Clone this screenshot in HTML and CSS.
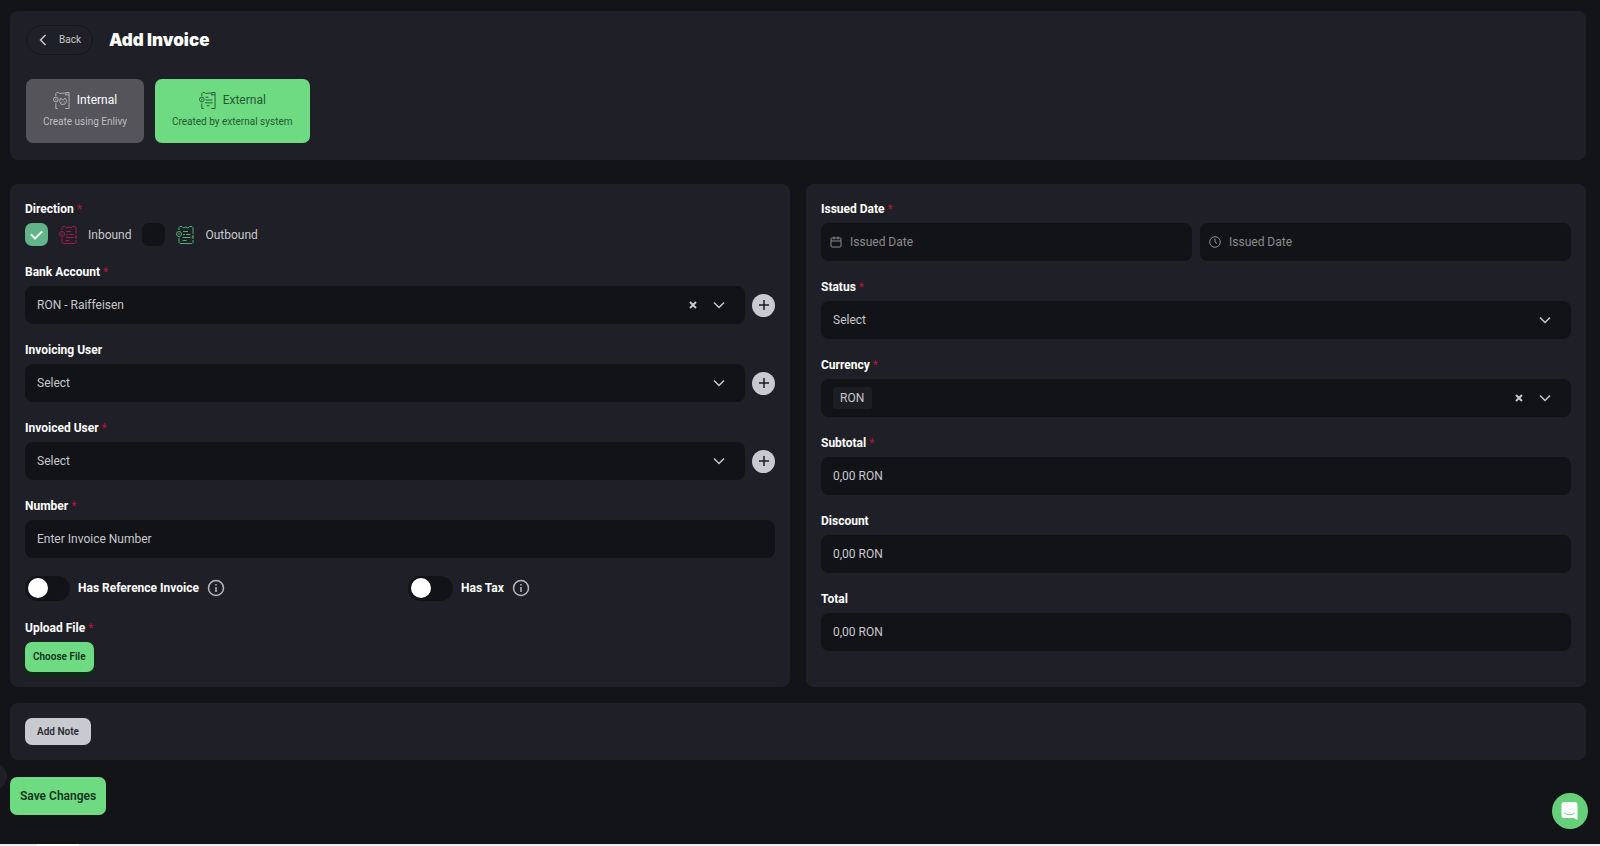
FILE: index.html
```html
<!DOCTYPE html>
<html lang="en">

<head>
    <meta charset="utf-8">
    <meta name="viewport" content="width=device-width, initial-scale=1">
    <title>Add Invoice</title>
    <link rel="stylesheet" href="styles.css">
</head>

<body>
    <!-- shared icons -->
    <svg class="sprite" aria-hidden="true">
        <symbol id="chevron" viewBox="0 0 12 8">
            <path d="M1 1.5l5 5 5-5" />
        </symbol>
        <symbol id="plus" viewBox="0 0 12 12">
            <path d="M6 1v10M1 6h10" />
        </symbol>
        <symbol id="cross" viewBox="0 0 8 8">
            <path d="M1 1l6 6M7 1L1 7" />
        </symbol>
        <symbol id="info" viewBox="0 0 18 18">
            <circle cx="9" cy="9" r="7.5" />
            <path d="M9 8v5M9 5v1.4" />
        </symbol>
        <symbol id="invoice" viewBox="0 0 18 18">
            <path d="M3 4V1.5L4 .5h2l1.5 1.5L10 1l2 1 1.5-1.5H16l1 1V8M3 12v4.5l1 1h12l1-1V14" />
            <circle cx="3" cy="8" r="2.5" />
            <path d="M3 7v2M7 5.5h5M7 8.500h2M10 8.500h4.500M6.500 11.500h8M6.500 14.500h4M17 9v4M15.500 11h2" />
        </symbol>
        <symbol id="invoice-plain" viewBox="0 0 18 18">
            <path d="M3 4.500V1.500L4 .5h1.500L7 1.500l6-.5L14.500.5 13 3h4V.5h-2.500M17 3v14.500h-4M3 12v5.500h2" />
            <circle cx="3" cy="8" r="2.500" />
            <path d="M3 7v2M7 5.500h3M7 8.500h7M6.500 11.500h8M8 14.500h3" />
        </symbol>
        <symbol id="invoice-internal" viewBox="0 0 18 18">
            <path d="M3 4.500V1.500L4 .5h1.500L7 1.500l6-.5L14.500.5 13 3h4V.5h-2.500M17 3v14.500h-4M3 12v5.500h2" />
            <circle cx="3" cy="8" r="2.500" />
            <path d="M3 7v2M7 10l1-3.500 2.500 2L13 6.500l1.500 3.500-2 3h-4zM9.500 10v1M12 10v1" />
        </symbol>
    </svg>

    <main class="page">
        <header class="card header">
            <div class="title-row">
                <a class="back" href="#">
                    <svg viewBox="0 0 8 12" aria-hidden="true"><path d="M6.5 1l-5 5 5 5" /></svg>
                    Back
                </a>
                <h1>Add Invoice</h1>
            </div>
            <div class="types">
                <button type="button" class="type">
                    <span class="type-name"><svg class="doc"><use href="#invoice-internal" /></svg>Internal</span>
                    <span class="type-text">Create using Enlivy</span>
                </button>
                <button type="button" class="type active">
                    <span class="type-name"><svg class="doc"><use href="#invoice-plain" /></svg>External</span>
                    <span class="type-text">Created by external system</span>
                </button>
            </div>
        </header>

        <form class="form">
            <div class="columns">
                <section class="card fields">
                    <div class="field">
                        <span class="label">Direction <i>*</i></span>
                        <div class="checks">
                            <label><input type="checkbox" class="check" checked><svg class="doc red"><use href="#invoice" /></svg>Inbound</label>
                            <label><input type="checkbox" class="check"><svg class="doc green"><use href="#invoice" /></svg>Outbound</label>
                        </div>
                    </div>

                    <div class="field">
                        <label class="label" for="bank">Bank Account <i>*</i></label>
                        <div class="with-add">
                            <div class="box">
                                <select id="bank"><option>RON - Raiffeisen</option></select>
                                <button type="button" class="clear" aria-label="Clear"><svg><use href="#cross" /></svg></button>
                                <svg class="chevron"><use href="#chevron" /></svg>
                            </div>
                            <button type="button" class="add" aria-label="Add bank account"><svg><use href="#plus" /></svg></button>
                        </div>
                    </div>

                    <div class="field">
                        <label class="label" for="invoicing">Invoicing User</label>
                        <div class="with-add">
                            <div class="box">
                                <select id="invoicing"><option>Select</option></select>
                                <svg class="chevron"><use href="#chevron" /></svg>
                            </div>
                            <button type="button" class="add" aria-label="Add invoicing user"><svg><use href="#plus" /></svg></button>
                        </div>
                    </div>

                    <div class="field">
                        <label class="label" for="invoiced">Invoiced User <i>*</i></label>
                        <div class="with-add">
                            <div class="box">
                                <select id="invoiced"><option>Select</option></select>
                                <svg class="chevron"><use href="#chevron" /></svg>
                            </div>
                            <button type="button" class="add" aria-label="Add invoiced user"><svg><use href="#plus" /></svg></button>
                        </div>
                    </div>

                    <div class="field">
                        <label class="label" for="number">Number <i>*</i></label>
                        <div class="box"><input id="number" type="text" placeholder="Enter Invoice Number"></div>
                    </div>

                    <div class="toggles">
                        <label><input type="checkbox" class="toggle">Has Reference Invoice<svg class="info"><use href="#info" /></svg></label>
                        <label><input type="checkbox" class="toggle">Has Tax<svg class="info"><use href="#info" /></svg></label>
                    </div>

                    <div class="field">
                        <span class="label">Upload File <i>*</i></span>
                        <button type="button" class="btn choose">Choose File</button>
                    </div>
                </section>

                <section class="card fields">
                    <div class="field">
                        <label class="label" for="date">Issued Date <i>*</i></label>
                        <div class="dates">
                            <div class="box muted">
                                <svg viewBox="0 0 12 12" aria-hidden="true"><rect x="1" y="2" width="10" height="9" rx="1" /><path d="M1 5h10M4 .5v3M8 .5v3" /></svg>
                                <input id="date" type="text" placeholder="Issued Date">
                            </div>
                            <div class="box muted">
                                <svg viewBox="0 0 12 12" aria-hidden="true"><circle cx="6" cy="6" r="5.3" /><path d="M6 2.5V6l2 1.5" /></svg>
                                <input type="text" placeholder="Issued Date" aria-label="Issued time">
                            </div>
                        </div>
                    </div>

                    <div class="field">
                        <label class="label" for="status">Status <i>*</i></label>
                        <div class="box">
                            <select id="status"><option>Select</option></select>
                            <svg class="chevron"><use href="#chevron" /></svg>
                        </div>
                    </div>

                    <div class="field">
                        <label class="label" for="currency">Currency <i>*</i></label>
                        <div class="box">
                            <select id="currency" class="chip"><option>RON</option></select>
                            <button type="button" class="clear" aria-label="Clear"><svg><use href="#cross" /></svg></button>
                            <svg class="chevron"><use href="#chevron" /></svg>
                        </div>
                    </div>

                    <div class="field">
                        <label class="label" for="subtotal">Subtotal <i>*</i></label>
                        <div class="box"><input id="subtotal" type="text" value="0,00 RON"></div>
                    </div>

                    <div class="field">
                        <label class="label" for="discount">Discount</label>
                        <div class="box"><input id="discount" type="text" value="0,00 RON"></div>
                    </div>

                    <div class="field">
                        <label class="label" for="total">Total</label>
                        <div class="box"><input id="total" type="text" value="0,00 RON"></div>
                    </div>
                </section>
            </div>

            <section class="card notes">
                <button type="button" class="btn note">Add Note</button>
            </section>

            <button type="submit" class="btn save">Save Changes</button>
        </form>
    </main>

    <div class="edge"><span></span></div>
    <div class="handle"></div>
    <button type="button" class="chat" aria-label="Open chat">
        <svg viewBox="0 0 18 20" aria-hidden="true">
            <path class="bubble" d="M3 1h11a2.500 2.500 0 0 1 2.500 2.500V19l-3.500-2H3a2.500 2.500 0 0 1-2.500-2.500v-11A2.500 2.500 0 0 1 3 1z" />
            <path class="smile" d="M3.500 12c3 2.300 7 2.300 10 0" />
        </svg>
    </button>
</body>

</html>
```
FILE: styles.css
```css
:root {
    --bg: #131418;
    --card: #1f2027;
    --input: #121317;
    --text: #c8c8cc;
    --green: #6edb82;
    --light: #c9c9d0;
}

* {
    box-sizing: border-box;
}

body {
    margin: 0;
    min-height: 100vh;
    display: flex;
    flex-direction: column;
    background: var(--bg);
    color: var(--text);
    font: 12px/20px Roboto, "Liberation Sans", sans-serif;
}

button,
input,
select {
    font: inherit;
    color: inherit;
    margin: 0;
}

button {
    border: 0;
    padding: 0;
    cursor: pointer;
}

svg {
    flex: none;
    fill: none;
    stroke: currentColor;
}

.sprite {
    display: none;
}

.page {
    flex: 1;
    padding: 11px 14px 16px 10px;
}

.card {
    background: var(--card);
    border-radius: 8px;
    padding: 15px;
}

/* header */
.header {
    padding: 14px 16px 17px;
    margin-bottom: 24px;
}

.title-row {
    display: flex;
    align-items: center;
    gap: 16px;
    margin-bottom: 24px;
}

h1 {
    margin: 0;
    color: #fff;
    font: 900 17px/28px Inter, sans-serif;
}

.back {
    display: flex;
    align-items: center;
    gap: 12px;
    height: 30px;
    padding: 0 11px 0 12px;
    border: 1px solid #16171b;
    border-radius: 15px;
    color: var(--text);
    font-size: 10px;
    text-decoration: none;
}

.back svg {
    width: 8px;
    height: 12px;
    stroke-width: 1.5;
}

.types {
    display: flex;
    gap: 11px;
}

.type {
    display: flex;
    flex-direction: column;
    align-items: center;
    gap: 2px;
    padding: 11px 17px;
    border-radius: 7px;
    background: #54545a;
    color: #bdbdc2;
}

.type-name {
    display: flex;
    align-items: center;
    gap: 7px;
    color: #fff;
    font-size: 12px;
}

.type-text {
    font-size: 10px;
}

.type .doc {
    width: 17px;
    height: 17px;
    color: #b4b4b9;
}

.type.active {
    background: var(--green);
}

.type.active,
.type.active .type-name,
.type.active .doc {
    color: #245a35;
}

/* form */
.columns {
    display: grid;
    grid-template-columns: 1fr 1fr;
    gap: 16px;
    margin-bottom: 16px;
}

.fields {
    display: flex;
    flex-direction: column;
    gap: 16px;
}

.field {
    display: flex;
    flex-direction: column;
    gap: 4px;
}

.label {
    color: #fff;
    font-weight: 700;
}

.label i {
    color: #b3123f;
    font-style: normal;
    font-weight: 400;
}

.box {
    flex: 1;
    display: flex;
    align-items: center;
    min-width: 0;
    height: 38px;
    padding: 0 20px 0 12px;
    border-radius: 8px;
    background: var(--input);
}

.box input,
.box select {
    flex: 1;
    min-width: 0;
    height: 100%;
    padding: 0;
    border: 0;
    outline: 0;
    background: none;
    appearance: none;
}

.fields > .field > .box {
    flex: none;
}

.box input::placeholder {
    color: inherit;
    opacity: 1;
}

.box .chip {
    flex: none;
    height: 22px;
    padding: 0 7px;
    border-radius: 3px;
    background: #1c1e23;
}

.clear {
    display: flex;
    margin-left: auto;
    margin-right: 16px;
    background: none;
}

.clear svg {
    width: 8px;
    height: 8px;
    stroke-width: 2;
}

.chevron {
    width: 12px;
    height: 8px;
    stroke-width: 1.5;
}

.with-add {
    display: flex;
    align-items: center;
    gap: 7px;
}

.add {
    display: grid;
    place-items: center;
    width: 23px;
    height: 23px;
    border-radius: 50%;
    background: var(--light);
    color: #1b1c21;
}

.add svg {
    width: 12px;
    height: 12px;
    stroke-width: 1.5;
}

.dates {
    display: flex;
    gap: 8px;
}

.muted {
    gap: 8px;
    padding-left: 9px;
    color: #8b8b90;
}

.muted svg {
    width: 12px;
    height: 12px;
}

/* checkboxes and toggles */
.checks,
.checks label {
    display: flex;
    align-items: center;
    gap: 11px;
}

.doc {
    width: 18px;
    height: 18px;
}

.red {
    color: #a5164a;
}

.green {
    color: #4fae6f;
}

.check {
    appearance: none;
    display: grid;
    place-items: center;
    width: 23px;
    height: 23px;
    border-radius: 7px;
    background: var(--input);
}

.check:checked {
    background: #61b588;
}

.check:checked::before {
    content: "";
    width: 9px;
    height: 5px;
    margin-bottom: 3px;
    border: solid #fff;
    border-width: 0 0 2px 2px;
    transform: rotate(-45deg);
}

.toggles {
    display: grid;
    grid-template-columns: 1fr 1fr;
    gap: 16px;
}

.toggles label {
    display: flex;
    align-items: center;
    gap: 8px;
    height: 28px;
    color: #fff;
    font-weight: 700;
}

.toggle {
    appearance: none;
    display: flex;
    align-items: center;
    width: 45px;
    height: 25px;
    padding: 0 3px;
    border-radius: 13px;
    background: var(--input);
}

.toggle::before {
    content: "";
    width: 20px;
    height: 20px;
    border-radius: 50%;
    background: #fff;
}

.toggle:checked {
    justify-content: flex-end;
    background: var(--green);
}

.info {
    width: 18px;
    height: 18px;
    color: #b9b9bd;
    stroke-width: 1.5;
}

/* buttons */
.btn {
    border-radius: 7px;
    background: var(--green);
    color: #14311d;
    font-weight: 600;
}

.choose {
    align-self: flex-start;
    height: 30px;
    padding: 0 8px;
    font-size: 10px;
    box-shadow: 0 3px 4px #07320f;
}

.notes {
    display: flex;
    margin-bottom: 17px;
}

.note {
    height: 27px;
    padding: 0 12px;
    background: var(--light);
    color: #2a2b31;
    font-size: 10px;
}

.save {
    height: 38px;
    padding: 0 10px;
}

/* bottom edge, drawer handle and chat launcher */
.edge {
    height: 2px;
    padding-left: 37px;
    background: #ececec;
}

.edge span {
    display: block;
    width: 42px;
    height: 2px;
    background: #fff;
}

.handle {
    position: fixed;
    left: -20px;
    bottom: 56px;
    width: 27px;
    height: 27px;
    border-radius: 50%;
    background: var(--card);
}

.chat {
    position: fixed;
    right: 12px;
    bottom: 17px;
    display: grid;
    place-items: center;
    width: 36px;
    height: 36px;
    border-radius: 50%;
    background: #66cf79;
}

.chat svg {
    width: 18px;
    height: 20px;
}

.bubble {
    fill: #fff;
    stroke: none;
}

.smile {
    stroke: #66cf79;
    stroke-linecap: round;
}
```
